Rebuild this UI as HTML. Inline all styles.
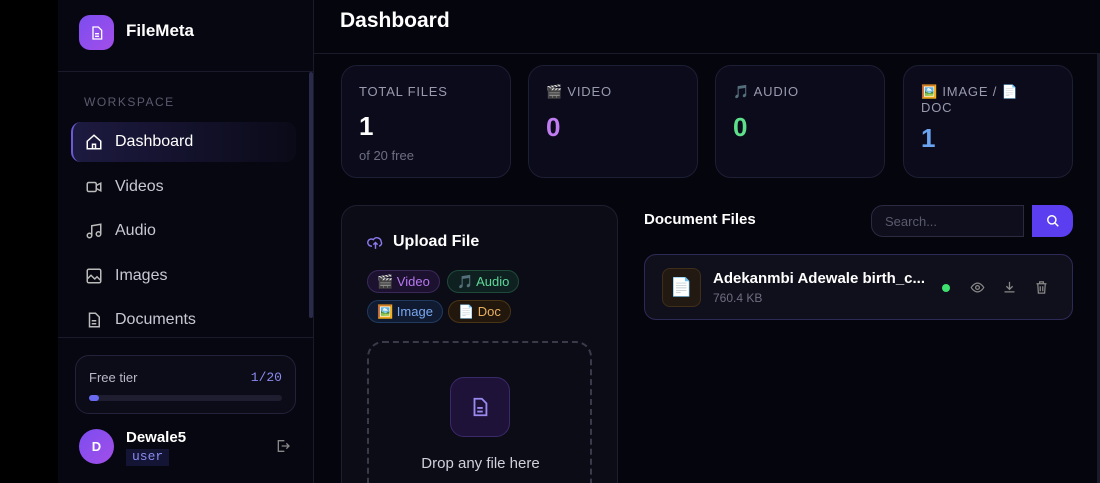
<!DOCTYPE html>
<html style="overflow:hidden;width:1100px;height:483px"><head><style>
*{box-sizing:border-box;margin:0;padding:0}
body{width:1100px;height:483px;overflow:hidden;background:#000;font-family:"Liberation Sans","Noto Sans CJK SC",sans-serif;color:#e8e8f0;position:relative}
.abs{position:absolute}
.side{left:58px;top:0;width:256px;height:483px;background:#070711;border-right:1px solid #1a1a2a;overflow:hidden}
.main{left:314px;top:0;width:786px;height:483px;background:#05050e;overflow:hidden}
.nav{position:absolute;left:13px;width:225px;height:40px;display:flex;align-items:center;padding-left:14px;font-size:16px;color:#c8c8d4}
.nav svg{margin-right:12px}
.card{position:absolute;top:65px;width:170px;height:113px;border:1px solid #1e1e34;border-radius:16px;background:#0b0b1c;padding:18px 17px}
.lbl{font-size:13px;letter-spacing:0.8px;color:#9a9aae}
.num{font-size:26px;font-weight:bold;margin-top:12px}
.pill{position:absolute;height:23px;border-radius:12px;font-size:13px;display:flex;align-items:center;padding:0 9px}
</style></head><body>
<div class="abs side">
 <div class="abs" style="left:21px;top:15px;width:35px;height:35px;border-radius:11px;background:linear-gradient(135deg,#7c4df0,#a24ee8);display:flex;align-items:center;justify-content:center">
  <svg width="16" height="16" viewBox="0 0 24 24" fill="none" stroke="#fff" stroke-width="2"><path d="M6 3h8l5 5v13H6z"/><path d="M9 13h6M9 17h6"/></svg></div>
 <div class="abs" style="left:68px;top:21px;font-size:17px;font-weight:bold;color:#fff">FileMeta</div>
 <div class="abs" style="left:0;top:71px;width:255px;height:1px;background:#1a1a2a"></div>
 <div class="abs" style="left:251px;top:72px;width:4px;height:246px;background:#2a2a4a;border-radius:2px"></div>
 <div class="abs" style="left:26px;top:95px;font-size:12px;letter-spacing:1.5px;color:#5a5a6e">WORKSPACE</div>
 <div class="nav" style="top:122px;background:linear-gradient(90deg,#1d1a40,#0a0a18);border-left:2px solid #6a5ad8;border-radius:10px;color:#fff;padding-left:12px">
  <svg width="18" height="18" viewBox="0 0 24 24" fill="none" stroke="#fff" stroke-width="2"><path d="M3 11l9-8 9 8v10H3z"/><path d="M10 21v-6h4v6"/></svg>Dashboard</div>
 <div class="nav" style="top:167px"><svg width="18" height="18" viewBox="0 0 24 24" fill="none" stroke="#bbb" stroke-width="2"><rect x="3" y="6" width="12" height="12" rx="2"/><path d="M15 10l6-3v10l-6-3"/></svg>Videos</div>
 <div class="nav" style="top:211px"><svg width="18" height="18" viewBox="0 0 24 24" fill="none" stroke="#bbb" stroke-width="2"><path d="M9 18V5l12-2v13"/><circle cx="6" cy="18" r="3"/><circle cx="18" cy="16" r="3"/></svg>Audio</div>
 <div class="nav" style="top:256px"><svg width="18" height="18" viewBox="0 0 24 24" fill="none" stroke="#bbb" stroke-width="2"><rect x="3" y="3" width="18" height="18" rx="2"/><path d="M3 16l5-5 5 5 3-3 5 5"/></svg>Images</div>
 <div class="nav" style="top:300px"><svg width="18" height="18" viewBox="0 0 24 24" fill="none" stroke="#bbb" stroke-width="2"><path d="M6 3h8l5 5v13H6z"/><path d="M9 13h6M9 17h6"/></svg>Documents</div>
 <div class="abs" style="left:0;top:337px;width:255px;height:1px;background:#1a1a2a"></div>
 <div class="abs" style="left:17px;top:355px;width:221px;height:59px;border:1px solid #22223a;border-radius:14px;background:#0c0c18">
  <div class="abs" style="left:13px;top:14px;font-size:13px;color:#b8b8c8">Free tier</div>
  <div class="abs" style="right:13px;top:14px;font-size:13px;color:#8a8af0;font-family:'Liberation Mono',monospace">1/20</div>
  <div class="abs" style="left:13px;top:39px;width:193px;height:6px;border-radius:3px;background:#1e1e30"><div style="width:10px;height:6px;border-radius:3px;background:#6a6af0"></div></div>
 </div>
 <div class="abs" style="left:21px;top:429px;width:35px;height:35px;border-radius:50%;background:linear-gradient(135deg,#7c4df0,#a24ee8);display:flex;align-items:center;justify-content:center;font-weight:bold;font-size:13px;color:#fff">D</div>
 <div class="abs" style="left:68px;top:429px;font-size:15px;font-weight:bold;color:#fff">Dewale5</div>
 <div class="abs" style="left:68px;top:449px;padding:0 6px;height:17px;background:#141434;font-family:'Liberation Mono',monospace;font-size:13px;color:#8a8af0">user</div>
 <svg class="abs" style="left:217px;top:438px" width="16" height="16" viewBox="0 0 24 24" fill="none" stroke="#888" stroke-width="2"><path d="M14 4H5v16h9"/><path d="M10 12h11M17 8l4 4-4 4"/></svg>
</div>
<div class="abs main">
 <div class="abs" style="left:26px;top:9px;font-size:21px;font-weight:bold;color:#fff">Dashboard</div>
 <div class="abs" style="left:0;top:53px;width:786px;height:1px;background:#1a1a2a"></div>
 <div class="card" style="left:27px"><div class="lbl">TOTAL FILES</div><div class="num" style="color:#fff">1</div><div style="font-size:13px;color:#6e6e82;margin-top:6px">of 20 free</div></div>
 <div class="card" style="left:214px"><div class="lbl">🎬 VIDEO</div><div class="num" style="color:#c07cf0">0</div></div>
 <div class="card" style="left:401px"><div class="lbl">🎵 AUDIO</div><div class="num" style="color:#5ee08a">0</div></div>
 <div class="card" style="left:589px"><div class="lbl">🖼️ IMAGE / 📄<br>DOC</div><div class="num" style="color:#6aa4f0;margin-top:8px">1</div></div>
 <div class="abs" style="left:27px;top:205px;width:277px;height:278px;border:1px solid #1e1e30;border-bottom:none;border-radius:16px 16px 0 0;background:#0c0c16">
  <svg class="abs" style="left:25px;top:28px" width="17" height="17" viewBox="0 0 24 24" fill="none" stroke="#8a7af0" stroke-width="2"><path d="M7 17a5 5 0 1 1 2-9 6 6 0 0 1 11 3 4 4 0 0 1-3 6"/><path d="M12 21v-9M9 15l3-3 3 3"/></svg>
  <div class="abs" style="left:51px;top:27px;font-size:16px;font-weight:bold;color:#fff">Upload File</div>
  <div class="pill" style="left:25px;top:64px;background:#1c1230;border:1px solid #3a2858;color:#b878f0">🎬 Video</div>
  <div class="pill" style="left:105px;top:64px;background:#0f2020;border:1px solid #1e4a3a;color:#5ed89a">🎵 Audio</div>
  <div class="pill" style="left:25px;top:94px;background:#101a30;border:1px solid #203a60;color:#7aa8f0">🖼️ Image</div>
  <div class="pill" style="left:106px;top:94px;background:#22170c;border:1px solid #4a3418;color:#e8b060">📄 Doc</div>
  <div class="abs" style="left:25px;top:135px;width:225px;height:143px;border:2px dashed #3a3a4a;border-bottom:none;border-radius:16px 16px 0 0"></div>
  <div class="abs" style="left:108px;top:171px;width:60px;height:60px;border-radius:14px;background:#1e1238;border:1px solid #3a2a6a;display:flex;align-items:center;justify-content:center">
   <svg width="22" height="22" viewBox="0 0 24 24" fill="none" stroke="#9a8af0" stroke-width="2"><path d="M6 3h8l5 5v13H6z"/><path d="M9 13h6M9 17h6"/></svg></div>
  <div class="abs" style="left:0;width:277px;top:249px;text-align:center;font-size:15px;color:#d0d0dc">Drop any file here</div>
 </div>
 <div class="abs" style="left:330px;top:211px;font-size:15px;font-weight:bold;color:#fff">Document Files</div>
 <div class="abs" style="left:557px;top:205px;width:153px;height:32px;border:1px solid #2a2a40;border-radius:12px 0 0 12px;background:#0e0e1c;font-size:13px;color:#5a5a6e;padding:8px 13px">Search...</div>
 <div class="abs" style="left:718px;top:205px;width:41px;height:32px;border-radius:0 12px 12px 0;background:#5b3ef0;display:flex;align-items:center;justify-content:center">
  <svg width="14" height="14" viewBox="0 0 24 24" fill="none" stroke="#fff" stroke-width="2.5"><circle cx="10" cy="10" r="7"/><path d="M15 15l6 6"/></svg></div>
 <div class="abs" style="left:330px;top:254px;width:429px;height:66px;border:1px solid #2e2a58;border-radius:12px;background:#10101c">
  <div class="abs" style="left:17px;top:13px;width:39px;height:39px;border-radius:8px;background:#221a12;border:1px solid #3e2e1a;display:flex;align-items:center;justify-content:center;font-size:18px">📄</div>
  <div class="abs" style="left:68px;top:15px;font-size:15px;font-weight:bold;color:#fff">Adekanmbi Adewale birth_c...</div>
  <div class="abs" style="left:68px;top:36px;font-size:12px;color:#6e6e82">760.4 KB</div>
  <div class="abs" style="left:297px;top:29px;width:8px;height:8px;border-radius:50%;background:#3ee070"></div>
  <svg class="abs" style="left:325px;top:25px" width="15" height="15" viewBox="0 0 24 24" fill="none" stroke="#888" stroke-width="2"><path d="M2 12s4-7 10-7 10 7 10 7-4 7-10 7S2 12 2 12z"/><circle cx="12" cy="12" r="3"/></svg>
  <svg class="abs" style="left:357px;top:25px" width="15" height="15" viewBox="0 0 24 24" fill="none" stroke="#888" stroke-width="2"><path d="M12 3v12M7 10l5 5 5-5M4 19h16"/></svg>
  <svg class="abs" style="left:389px;top:25px" width="15" height="15" viewBox="0 0 24 24" fill="none" stroke="#888" stroke-width="2"><path d="M4 6h16M9 6V3h6v3M6 6l1 15h10l1-15M10 10v8M14 10v8"/></svg>
 </div>
 <div class="abs" style="left:783px;top:54px;width:3px;height:429px;background:#1a1a2a"></div>
</div>
</body></html>
